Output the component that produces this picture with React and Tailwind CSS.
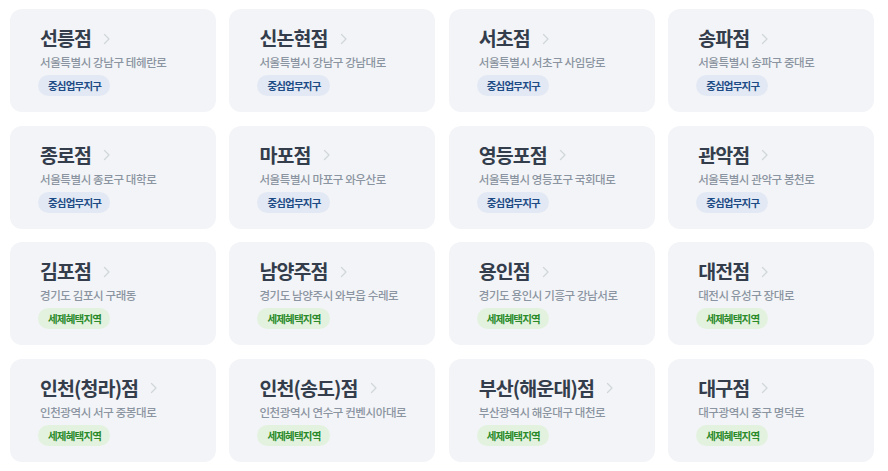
import React from 'react';

const stores = [
  { name: '선릉점', addr: '서울특별시 강남구 테헤란로', zone: 'biz' },
  { name: '신논현점', addr: '서울특별시 강남구 강남대로', zone: 'biz' },
  { name: '서초점', addr: '서울특별시 서초구 사임당로', zone: 'biz' },
  { name: '송파점', addr: '서울특별시 송파구 중대로', zone: 'biz' },
  { name: '종로점', addr: '서울특별시 종로구 대학로', zone: 'biz' },
  { name: '마포점', addr: '서울특별시 마포구 와우산로', zone: 'biz' },
  { name: '영등포점', addr: '서울특별시 영등포구 국회대로', zone: 'biz' },
  { name: '관악점', addr: '서울특별시 관악구 봉천로', zone: 'biz' },
  { name: '김포점', addr: '경기도 김포시 구래동', zone: 'tax' },
  { name: '남양주점', addr: '경기도 남양주시 와부읍 수레로', zone: 'tax' },
  { name: '용인점', addr: '경기도 용인시 기흥구 강남서로', zone: 'tax' },
  { name: '대전점', addr: '대전시 유성구 장대로', zone: 'tax' },
  { name: '인천(청라)점', addr: '인천광역시 서구 중봉대로', zone: 'tax' },
  { name: '인천(송도)점', addr: '인천광역시 연수구 컨벤시아대로', zone: 'tax' },
  { name: '부산(해운대)점', addr: '부산광역시 해운대구 대천로', zone: 'tax' },
  { name: '대구점', addr: '대구광역시 중구 명덕로', zone: 'tax' },
];

function Chevron() {
  return (
    <svg width="8" height="12" viewBox="0 0 8 12" fill="none" className="ml-[12px] mt-[1px]">
      <path d="M1.5 1.5L6 6l-4.5 4.5" stroke="#d1d6db" strokeWidth="1.3" strokeLinecap="round" strokeLinejoin="round" />
    </svg>
  );
}

function StoreCard({ store }) {
  const isBiz = store.zone === 'biz';
  return (
    <div className="bg-[#f3f4f7] rounded-[12px] h-[103px] pl-[30px] pt-[15px]">
      <div className="flex items-center h-[28px]">
        <span className="text-[19.5px] leading-[28px] font-bold text-[#333d4b] tracking-[-0.9px]">{store.name}</span>
        <Chevron />
      </div>
      <div className="text-[11.5px] leading-[18px] font-medium text-[#8b95a1] mt-[1px] tracking-[-0.4px]">{store.addr}</div>
      <div className="mt-[4px] ml-[-2px] flex">
        {isBiz ? (
          <span className="h-[21px] pl-[10px] pr-[9px] rounded-full bg-[#e2e9f4] text-[#1d4b85] text-[10.5px] leading-[21px] font-bold tracking-[-0.8px]">
            중심업무지구
          </span>
        ) : (
          <span className="h-[21px] pl-[10px] pr-[9px] rounded-full bg-[#e3f2df] text-[#2a8a2a] text-[10.5px] leading-[21px] font-bold tracking-[-0.8px]">
            세제혜택지역
          </span>
        )}
      </div>
    </div>
  );
}

export default function App() {
  return (
    <div
      className="bg-white w-[888px] h-[471px] pl-[10px] pt-[9px]"
      style={{ fontFamily: '"Noto Sans CJK KR", "Noto Sans", sans-serif' }}
    >
      <div className="grid grid-cols-4 w-[864px] gap-x-[13.5px] gap-y-[13.5px]">
        {stores.map((s) => (
          <StoreCard key={s.name} store={s} />
        ))}
      </div>
    </div>
  );
}
